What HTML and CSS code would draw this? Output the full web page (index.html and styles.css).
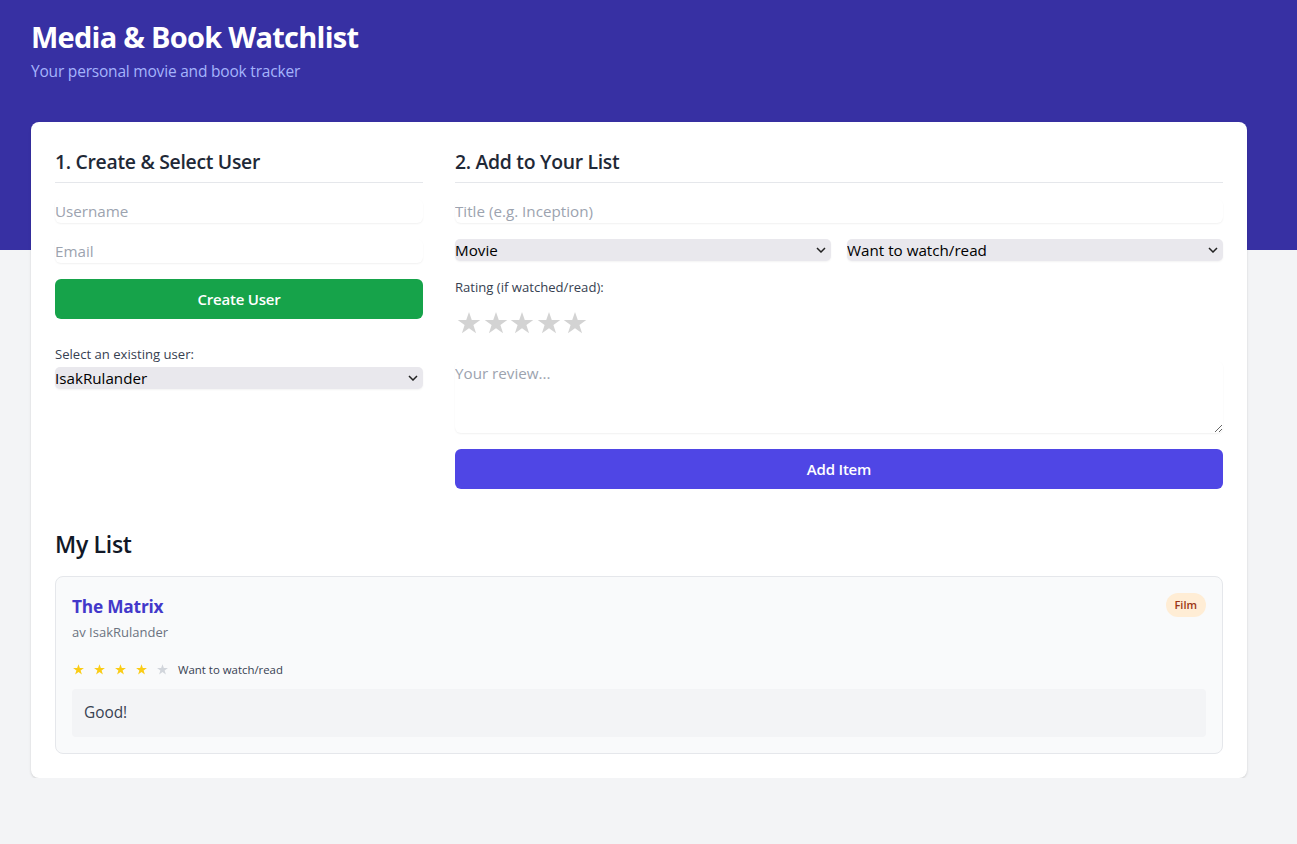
FILE: index.html
```html
<!DOCTYPE html>
<html lang="en">
<head>
<meta charset="utf-8">
<title>Media &amp; Book Watchlist</title>
<link rel="stylesheet" href="styles.css">
</head>
<body>
<header class="hero">
  <h1 class="hero-title">Media &amp; Book Watchlist</h1>
  <p class="hero-sub">Your personal movie and book tracker</p>
</header>

<main class="panel">
  <div class="forms">
    <section class="col col-user">
      <h2 class="sec-title">1. Create &amp; Select User</h2>
      <div class="stack">
        <input class="field" type="text" placeholder="Username">
        <input class="field" type="email" placeholder="Email">
        <button class="btn btn-green">Create User</button>
      </div>
      <div class="existing">
        <label class="small-label">Select an existing user:</label>
        <div class="select-wrap">
          <select class="select"><option>IsakRulander</option></select>
          <svg class="chev" viewBox="0 0 10 6" width="10" height="6"><polyline points="1,1 5,5 9,1" fill="none" stroke="#222" stroke-width="1.5"/></svg>
        </div>
      </div>
    </section>

    <section class="col col-add">
      <h2 class="sec-title">2. Add to Your List</h2>
      <div class="stack">
        <input class="field" type="text" placeholder="Title (e.g. Inception)">
        <div class="select-row">
          <div class="select-wrap">
            <select class="select"><option>Movie</option><option>Book</option></select>
            <svg class="chev" viewBox="0 0 10 6" width="10" height="6"><polyline points="1,1 5,5 9,1" fill="none" stroke="#222" stroke-width="1.5"/></svg>
          </div>
          <div class="select-wrap">
            <select class="select"><option>Want to watch/read</option><option>Watched/read</option></select>
            <svg class="chev" viewBox="0 0 10 6" width="10" height="6"><polyline points="1,1 5,5 9,1" fill="none" stroke="#222" stroke-width="1.5"/></svg>
          </div>
        </div>
        <div class="rating">
          <label class="small-label">Rating (if watched/read):</label>
          <div class="big-stars">
            <svg class="big-star" viewBox="0 0 24 23"><polygon points="12,0 14.9,8.3 23.8,8.3 16.6,13.5 19.4,22.3 12,16.9 4.6,22.3 7.4,13.5 0.2,8.3 9.1,8.3" /></svg>
            <svg class="big-star" viewBox="0 0 24 23"><polygon points="12,0 14.9,8.3 23.8,8.3 16.6,13.5 19.4,22.3 12,16.9 4.6,22.3 7.4,13.5 0.2,8.3 9.1,8.3" /></svg>
            <svg class="big-star" viewBox="0 0 24 23"><polygon points="12,0 14.9,8.3 23.8,8.3 16.6,13.5 19.4,22.3 12,16.9 4.6,22.3 7.4,13.5 0.2,8.3 9.1,8.3" /></svg>
            <svg class="big-star" viewBox="0 0 24 23"><polygon points="12,0 14.9,8.3 23.8,8.3 16.6,13.5 19.4,22.3 12,16.9 4.6,22.3 7.4,13.5 0.2,8.3 9.1,8.3" /></svg>
            <svg class="big-star" viewBox="0 0 24 23"><polygon points="12,0 14.9,8.3 23.8,8.3 16.6,13.5 19.4,22.3 12,16.9 4.6,22.3 7.4,13.5 0.2,8.3 9.1,8.3" /></svg>
          </div>
        </div>
        <textarea class="field area" rows="3" placeholder="Your review..."></textarea>
        <button class="btn btn-indigo">Add Item</button>
      </div>
    </section>
  </div>

  <h2 class="list-title">My List</h2>
  <article class="item">
    <div class="item-head">
      <div>
        <h3 class="item-title">The Matrix</h3>
        <p class="item-by">av IsakRulander</p>
      </div>
      <span class="badge">Film</span>
    </div>
    <div class="item-meta">
      <span class="mini-stars">
        <svg class="mini-star on" viewBox="0 0 24 23"><polygon points="12,0 14.9,8.3 23.8,8.3 16.6,13.5 19.4,22.3 12,16.9 4.6,22.3 7.4,13.5 0.2,8.3 9.1,8.3" /></svg>
        <svg class="mini-star on" viewBox="0 0 24 23"><polygon points="12,0 14.9,8.3 23.8,8.3 16.6,13.5 19.4,22.3 12,16.9 4.6,22.3 7.4,13.5 0.2,8.3 9.1,8.3" /></svg>
        <svg class="mini-star on" viewBox="0 0 24 23"><polygon points="12,0 14.9,8.3 23.8,8.3 16.6,13.5 19.4,22.3 12,16.9 4.6,22.3 7.4,13.5 0.2,8.3 9.1,8.3" /></svg>
        <svg class="mini-star on" viewBox="0 0 24 23"><polygon points="12,0 14.9,8.3 23.8,8.3 16.6,13.5 19.4,22.3 12,16.9 4.6,22.3 7.4,13.5 0.2,8.3 9.1,8.3" /></svg>
        <svg class="mini-star" viewBox="0 0 24 23"><polygon points="12,0 14.9,8.3 23.8,8.3 16.6,13.5 19.4,22.3 12,16.9 4.6,22.3 7.4,13.5 0.2,8.3 9.1,8.3" /></svg>
      </span>
      <span class="status">Want to watch/read</span>
    </div>
    <div class="review">Good!</div>
  </article>
</main>
</body>
</html>
```

FILE: styles.css
```css
* { box-sizing: border-box; }

body {
  margin: 0;
  background: #f3f4f6;
  font-family: "Open Sans", "Noto Sans", "Liberation Sans", sans-serif;
  color: #1f2937;
}

.hero {
  background: #3730a3;
  height: 250px;
  padding: 18px 31px 0;
}

.hero-title {
  margin: 0;
  font-size: 29px;
  line-height: 38px;
  font-weight: 700;
  color: #ffffff;
  letter-spacing: -0.75px;
}

.hero-sub {
  margin: 3px 0 0;
  font-size: 15.5px;
  line-height: 24px;
  color: #a5b4fc;
  letter-spacing: -0.2px;
}

.panel {
  background: #ffffff;
  margin: -128px 50px 0 31px;
  border-radius: 8px;
  box-shadow: 0 1px 3px rgba(0,0,0,0.1), 0 1px 2px rgba(0,0,0,0.06);
  padding: 24px;
}

.forms {
  display: grid;
  grid-template-columns: repeat(3, 1fr);
  gap: 32px;
}

.col-add { grid-column: span 2; }

.sec-title {
  margin: 0 0 16px;
  padding: 2px 0 6px;
  border-bottom: 1px solid #e5e7eb;
  font-size: 19.4px;
  line-height: 28px;
  font-weight: 600;
  color: #1f2937;
  letter-spacing: -0.3px;
}

.stack {
  display: flex;
  flex-direction: column;
  gap: 16px;
}

.field {
  display: block;
  width: 100%;
  height: 24px;
  padding: 0;
  border: none;
  border-radius: 6px;
  box-shadow: 0 1px 2px rgba(0,0,0,0.06);
  font-family: inherit;
  font-size: 15.2px;
  line-height: 24px;
  color: #1f2937;
  background: #ffffff;
  outline: none;
}

.field::placeholder { color: #9ca3af; }

.area {
  height: 72px;
  resize: vertical;
}

.btn {
  display: block;
  width: 100%;
  height: 40px;
  border: none;
  border-radius: 6px;
  color: #ffffff;
  font-family: inherit;
  font-size: 15px;
  font-weight: 600;
  letter-spacing: -0.2px;
  cursor: pointer;
}

.btn-green { background: #16a34a; }
.btn-indigo { background: #4f46e5; }

.existing { margin-top: 25px; }

.small-label {
  display: block;
  font-size: 13.1px;
  line-height: 20px;
  color: #374151;
  margin-bottom: 3px;
}

.select-wrap {
  position: relative;
}

.select {
  display: block;
  width: 100%;
  height: 22px;
  padding: 0 20px 0 0;
  border: none;
  border-radius: 5px;
  background: #e9e8ed;
  box-shadow: 0 1px 2px rgba(0,0,0,0.05);
  font-family: inherit;
  font-size: 15.2px;
  line-height: 22px;
  color: #000000;
  appearance: none;
  -webkit-appearance: none;
}

.chev {
  position: absolute;
  right: 5px;
  top: 8px;
  pointer-events: none;
}

.select-row {
  display: grid;
  grid-template-columns: 1fr 1fr;
  gap: 16px;
}

.rating .small-label { margin-bottom: 0; }

.big-stars {
  display: flex;
  gap: 2.5px;
  padding: 15px 0 11px 2px;
}

.big-star {
  width: 24px;
  height: 22px;
  fill: #d3d3d3;
}

.list-title {
  margin: 39px 0 16px;
  font-size: 23px;
  line-height: 32px;
  font-weight: 600;
  color: #111827;
  letter-spacing: -0.3px;
}

.item {
  background: #f9fafb;
  border: 1px solid #e5e7eb;
  border-radius: 8px;
  padding: 16px;
}

.item-head {
  display: flex;
  justify-content: space-between;
  align-items: flex-start;
}

.item-title {
  margin: 0;
  font-size: 17.3px;
  line-height: 28px;
  font-weight: 700;
  color: #4338ca;
  letter-spacing: -0.2px;
}

.item-by {
  margin: 1px 0 0;
  font-size: 13px;
  line-height: 20px;
  color: #6b7280;
}

.badge {
  background: #ffedd5;
  color: #9a3412;
  font-size: 11px;
  font-weight: 600;
  line-height: 24px;
  padding: 0 9px;
  border-radius: 999px;
}

.item-meta {
  display: flex;
  align-items: center;
  height: 24px;
  margin-top: 15px;
}

.mini-stars {
  display: flex;
  gap: 10px;
  padding-left: 1px;
}

.mini-star {
  width: 11px;
  height: 11px;
  fill: #d1d5db;
}

.mini-star.on { fill: #facc15; }

.status {
  margin-left: 10px;
  font-size: 11.4px;
  color: #374151;
}

.review {
  margin-top: 8px;
  background: #f3f4f6;
  border-radius: 4px;
  padding: 12px;
  font-size: 15.4px;
  line-height: 24px;
  color: #374151;
}
```
